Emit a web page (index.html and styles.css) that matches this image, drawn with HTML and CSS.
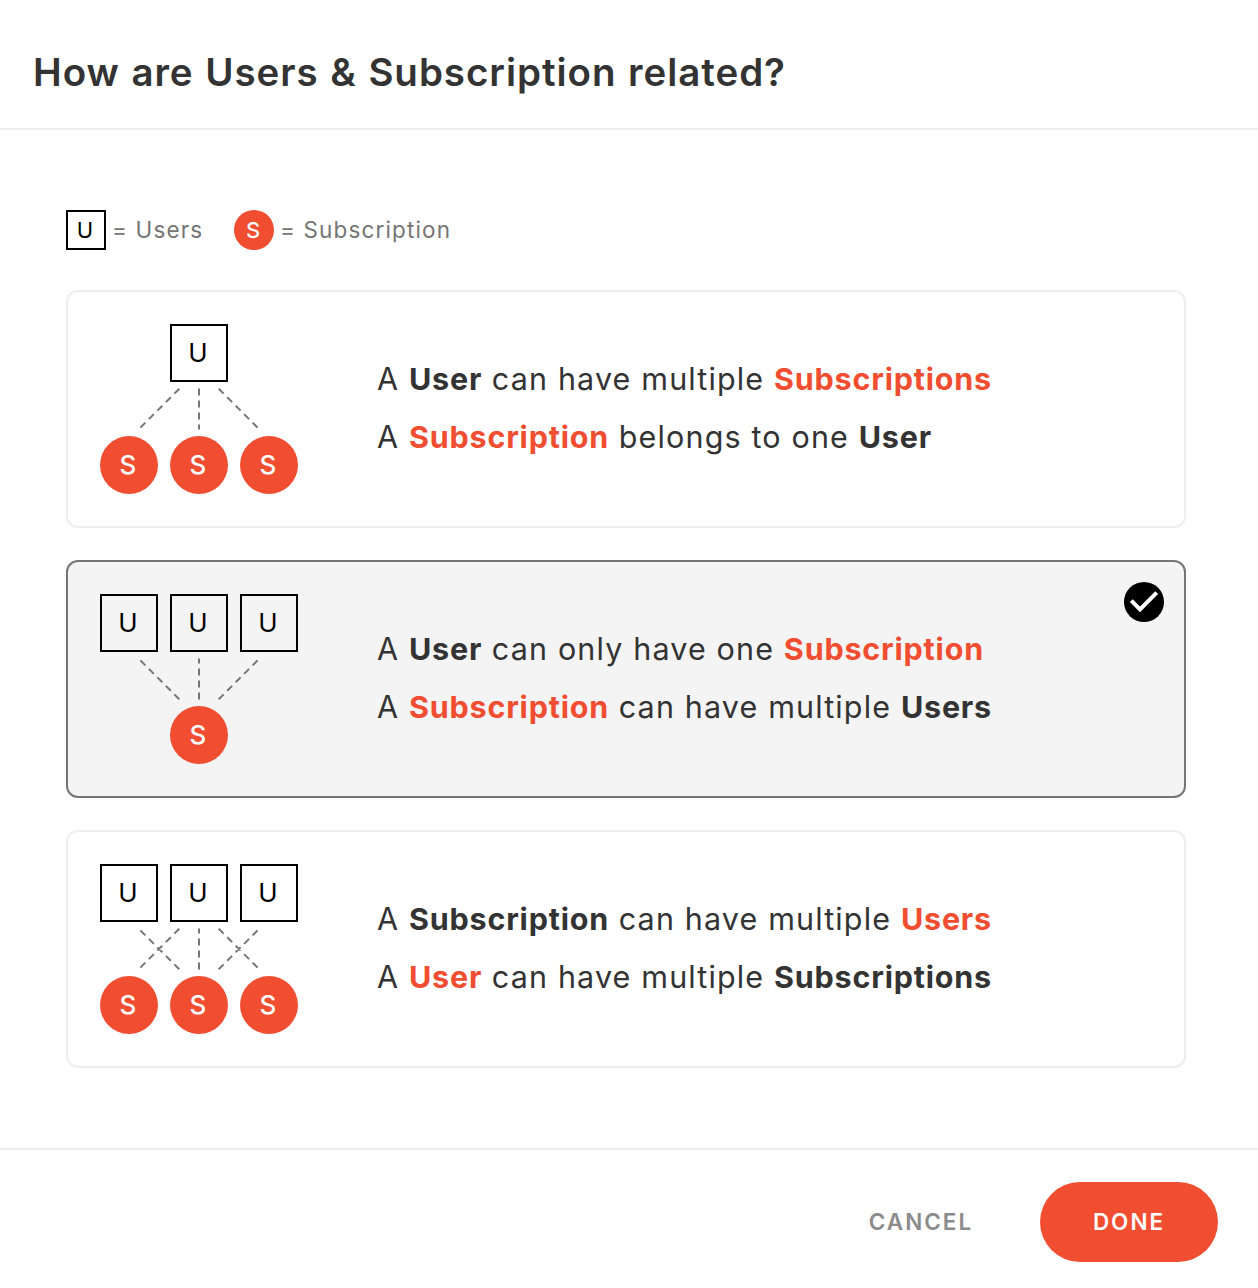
FILE: index.html
```html
<!DOCTYPE html>
<html lang="en">
<head>
  <meta charset="UTF-8">
  <title>Relationship</title>
  <link rel="stylesheet" href="styles.css">
</head>
<body>
  <div class="modal">
    <header class="modal-header">
      <h1>How are Users &amp; Subscription related?</h1>
    </header>

    <main class="modal-body">
      <div class="legend">
        <span class="node small user">U</span>
        <span class="legend-label users">= Users</span>
        <span class="node small sub">S</span>
        <span class="legend-label">= Subscription</span>
      </div>

      <div class="option">
        <div class="diagram">
          <div class="nodes"><span class="node user">U</span></div>
          <svg class="lines" width="198" height="54" viewBox="0 0 198 54">
            <path d="M79.3 6.7L40 46M99 6.5V47.5M118.7 6.7L158 46"/>
          </svg>
          <div class="nodes"><span class="node sub">S</span><span class="node sub">S</span><span class="node sub">S</span></div>
        </div>
        <div class="text">
          <p>A <b>User</b> can have multiple <b class="accent">Subscriptions</b></p>
          <p>A <b class="accent">Subscription</b> belongs to one <b>User</b></p>
        </div>
      </div>

      <div class="option selected">
        <div class="diagram">
          <div class="nodes"><span class="node user">U</span><span class="node user">U</span><span class="node user">U</span></div>
          <svg class="lines" width="198" height="54" viewBox="0 0 198 54">
            <path d="M79.3 47.3L40 8M99 47.5V6.5M118.7 47.3L158 8"/>
          </svg>
          <div class="nodes"><span class="node sub">S</span></div>
        </div>
        <div class="text">
          <p>A <b>User</b> can only have one <b class="accent">Subscription</b></p>
          <p>A <b class="accent">Subscription</b> can have multiple <b>Users</b></p>
        </div>
        <svg class="check" width="40" height="40" viewBox="0 0 40 40">
          <circle cx="20" cy="20" r="20"/>
          <path d="M7.3 18.7L16 27.5L32.7 10.7"/>
        </svg>
      </div>

      <div class="option">
        <div class="diagram">
          <div class="nodes"><span class="node user">U</span><span class="node user">U</span><span class="node user">U</span></div>
          <svg class="lines" width="198" height="54" viewBox="0 0 198 54">
            <path d="M79.3 6.7L40 46M118.7 6.7L158 46M79.3 47.3L40 8M99 47.5V6.5M118.7 47.3L158 8"/>
          </svg>
          <div class="nodes"><span class="node sub">S</span><span class="node sub">S</span><span class="node sub">S</span></div>
        </div>
        <div class="text">
          <p>A <b>Subscription</b> can have multiple <b class="accent">Users</b></p>
          <p>A <b class="accent">User</b> can have multiple <b>Subscriptions</b></p>
        </div>
      </div>
    </main>

    <footer class="modal-footer">
      <button type="button" class="btn cancel">CANCEL</button>
      <button type="button" class="btn done">DONE</button>
    </footer>
  </div>
</body>
</html>
```
FILE: styles.css
```css
* {
  box-sizing: border-box;
}
body {
  margin: 0;
  font-family: Inter, "Open Sans", sans-serif;
  color: #333;
  background: #fff;
}
.modal {
  display: flex;
  flex-direction: column;
  height: 1288px;
}
.modal-header {
  height: 130px;
  padding: 42px 32px 0 33px;
  border-bottom: 2px solid #eee;
}
h1 {
  margin: 0;
  font-size: 38.5px;
  line-height: 60px;
  font-weight: 600;
  letter-spacing: 0.95px;
  word-spacing: 1px;
  white-space: nowrap;
}
.modal-body {
  flex: 1;
  padding: 80px 72px 80px 66px;
}
.legend {
  display: flex;
  align-items: center;
  height: 40px;
  margin-bottom: 40px;
}
.legend-label {
  margin-left: 6px;
  padding-bottom: 2px;
  font-size: 22.5px;
  color: #757575;
  letter-spacing: 1.15px;
}
.legend-label.users {
  width: 122px;
}
.node {
  display: flex;
  align-items: center;
  justify-content: center;
  width: 58px;
  height: 58px;
  padding: 0 2px 2px 0;
  font-size: 26px;
}
.node.small {
  width: 40px;
  height: 40px;
  padding-bottom: 0;
  font-size: 22px;
}
.node.user {
  border: 2px solid #000;
  color: #000;
}
.node.sub {
  border-radius: 50%;
  background: #f14d30;
  color: #fff;
  font-weight: 500;
}
.option {
  position: relative;
  display: flex;
  align-items: center;
  height: 238px;
  padding: 32px;
  border: 2px solid #eee;
  border-radius: 12px;
}
.option + .option {
  margin-top: 32px;
}
.option.selected {
  background: #f4f4f4;
  border-color: #757575;
}
.diagram {
  width: 198px;
  margin-right: 79px;
}
.nodes {
  display: flex;
  justify-content: center;
  gap: 12px;
}
.lines {
  display: block;
  fill: none;
  stroke: #757575;
  stroke-width: 2;
  stroke-dasharray: 7 5;
}
.text {
  padding-bottom: 2px;
}
.text p {
  margin: 0;
  font-size: 30.5px;
  line-height: 58px;
  letter-spacing: 1.15px;
  white-space: nowrap;
}
.text b {
  font-weight: 700;
  letter-spacing: 0.8px;
}
.text .accent {
  color: #f14d30;
}
.check {
  position: absolute;
  top: 20px;
  right: 20px;
}
.check path {
  fill: none;
  stroke: #fff;
  stroke-width: 4;
}
.modal-footer {
  display: flex;
  align-items: center;
  justify-content: flex-end;
  height: 140px;
  padding: 6px 40px 0 0;
  border-top: 2px solid #eee;
}
.btn {
  height: 80px;
  padding: 0 0 2px;
  border: 0;
  border-radius: 40px;
  font-family: inherit;
  font-size: 22.5px;
  font-weight: 600;
  letter-spacing: 2px;
  cursor: pointer;
}
.btn.cancel {
  width: 178px;
  margin-right: 30px;
  background: none;
  color: #8b8b8b;
}
.btn.done {
  width: 178px;
  background: #f14d30;
  color: #fff;
}
```
